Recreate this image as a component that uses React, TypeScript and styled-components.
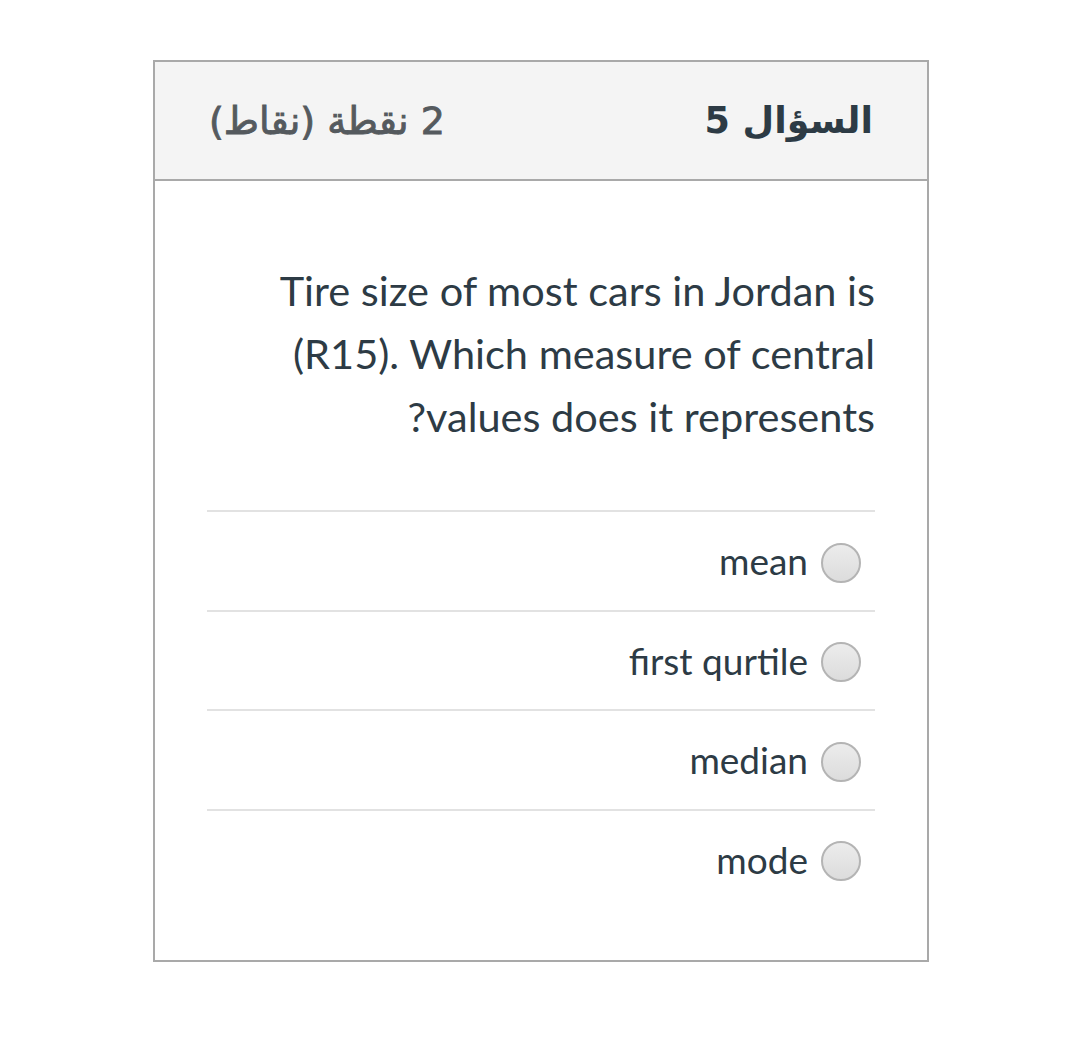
import React, { FC } from 'react';
import styled, { createGlobalStyle } from 'styled-components';

const GlobalStyle = createGlobalStyle`
  body {
    margin: 0;
    background: #ffffff;
    font-family: Lato, "DejaVu Sans", sans-serif;
  }
`;

const Page = styled.div`
  padding: 60px 151px 76px 153px;
`;

const Card = styled.div`
  direction: rtl;
  border: 2px solid #a9a9a9;
  background: #fff;
  box-sizing: border-box;
  height: 902px;
`;

const Header = styled.div`
  display: flex;
  justify-content: space-between;
  align-items: center;
  height: 119px;
  padding: 0 54px;
  background: #f4f4f4;
  border-bottom: 2px solid #a9a9a9;
  box-sizing: border-box;
`;

const Title = styled.h2<{ $muted?: boolean }>`
  margin: 0;
  font-family: "DejaVu Sans", sans-serif;
  font-weight: ${(p) => (p.$muted ? 'normal' : 'bold')};
  font-size: ${(p) => (p.$muted ? '38px' : '36.5px')};
  color: ${(p) => (p.$muted ? '#555a5e' : '#2d3b45')};
  -webkit-text-stroke: ${(p) => (p.$muted ? '0.9px #555a5e' : '0')};
`;

const Body = styled.div`
  padding: 78px 52px 0 52px;
`;

const Question = styled.p`
  margin: 0 0 62px;
  direction: rtl;
  text-align: right;
  font-family: Lato, sans-serif;
  font-size: 41.5px;
  line-height: 63px;
  color: #2d3b45;
`;

const Answers = styled.div`
  border-top: 2px solid #e2e2e2;
`;

const AnswerRow = styled.label`
  display: flex;
  align-items: center;
  gap: 13px;
  height: 97.5px;
  border-bottom: 2px solid #e2e2e2;
  padding-right: 14px;
  font-family: Lato, sans-serif;
  font-size: 37px;
  color: #2d3b45;

  &:last-child {
    border-bottom: none;
  }
`;

const Radio = styled.span`
  width: 36px;
  height: 36px;
  border-radius: 50%;
  border: 2px solid #b4b4b4;
  background: linear-gradient(#ececec, #dcdcdc);
  flex-shrink: 0;
  margin-top: 4px;
`;

const answers = ['mean', 'first qurtile', 'median', 'mode'];

const App: FC = () => (
  <>
    <GlobalStyle />
    <Page>
      <Card>
        <Header>
          <Title>السؤال 5</Title>
          <Title $muted>2 نقطة (نقاط)</Title>
        </Header>
        <Body>
          <Question>
            Tire size of most cars in Jordan is (R15). Which measure of central values does it represents?
          </Question>
          <Answers>
            {answers.map((a) => (
              <AnswerRow key={a}>
                <Radio />
                <span>{a}</span>
              </AnswerRow>
            ))}
          </Answers>
        </Body>
      </Card>
    </Page>
  </>
);

export default App;
